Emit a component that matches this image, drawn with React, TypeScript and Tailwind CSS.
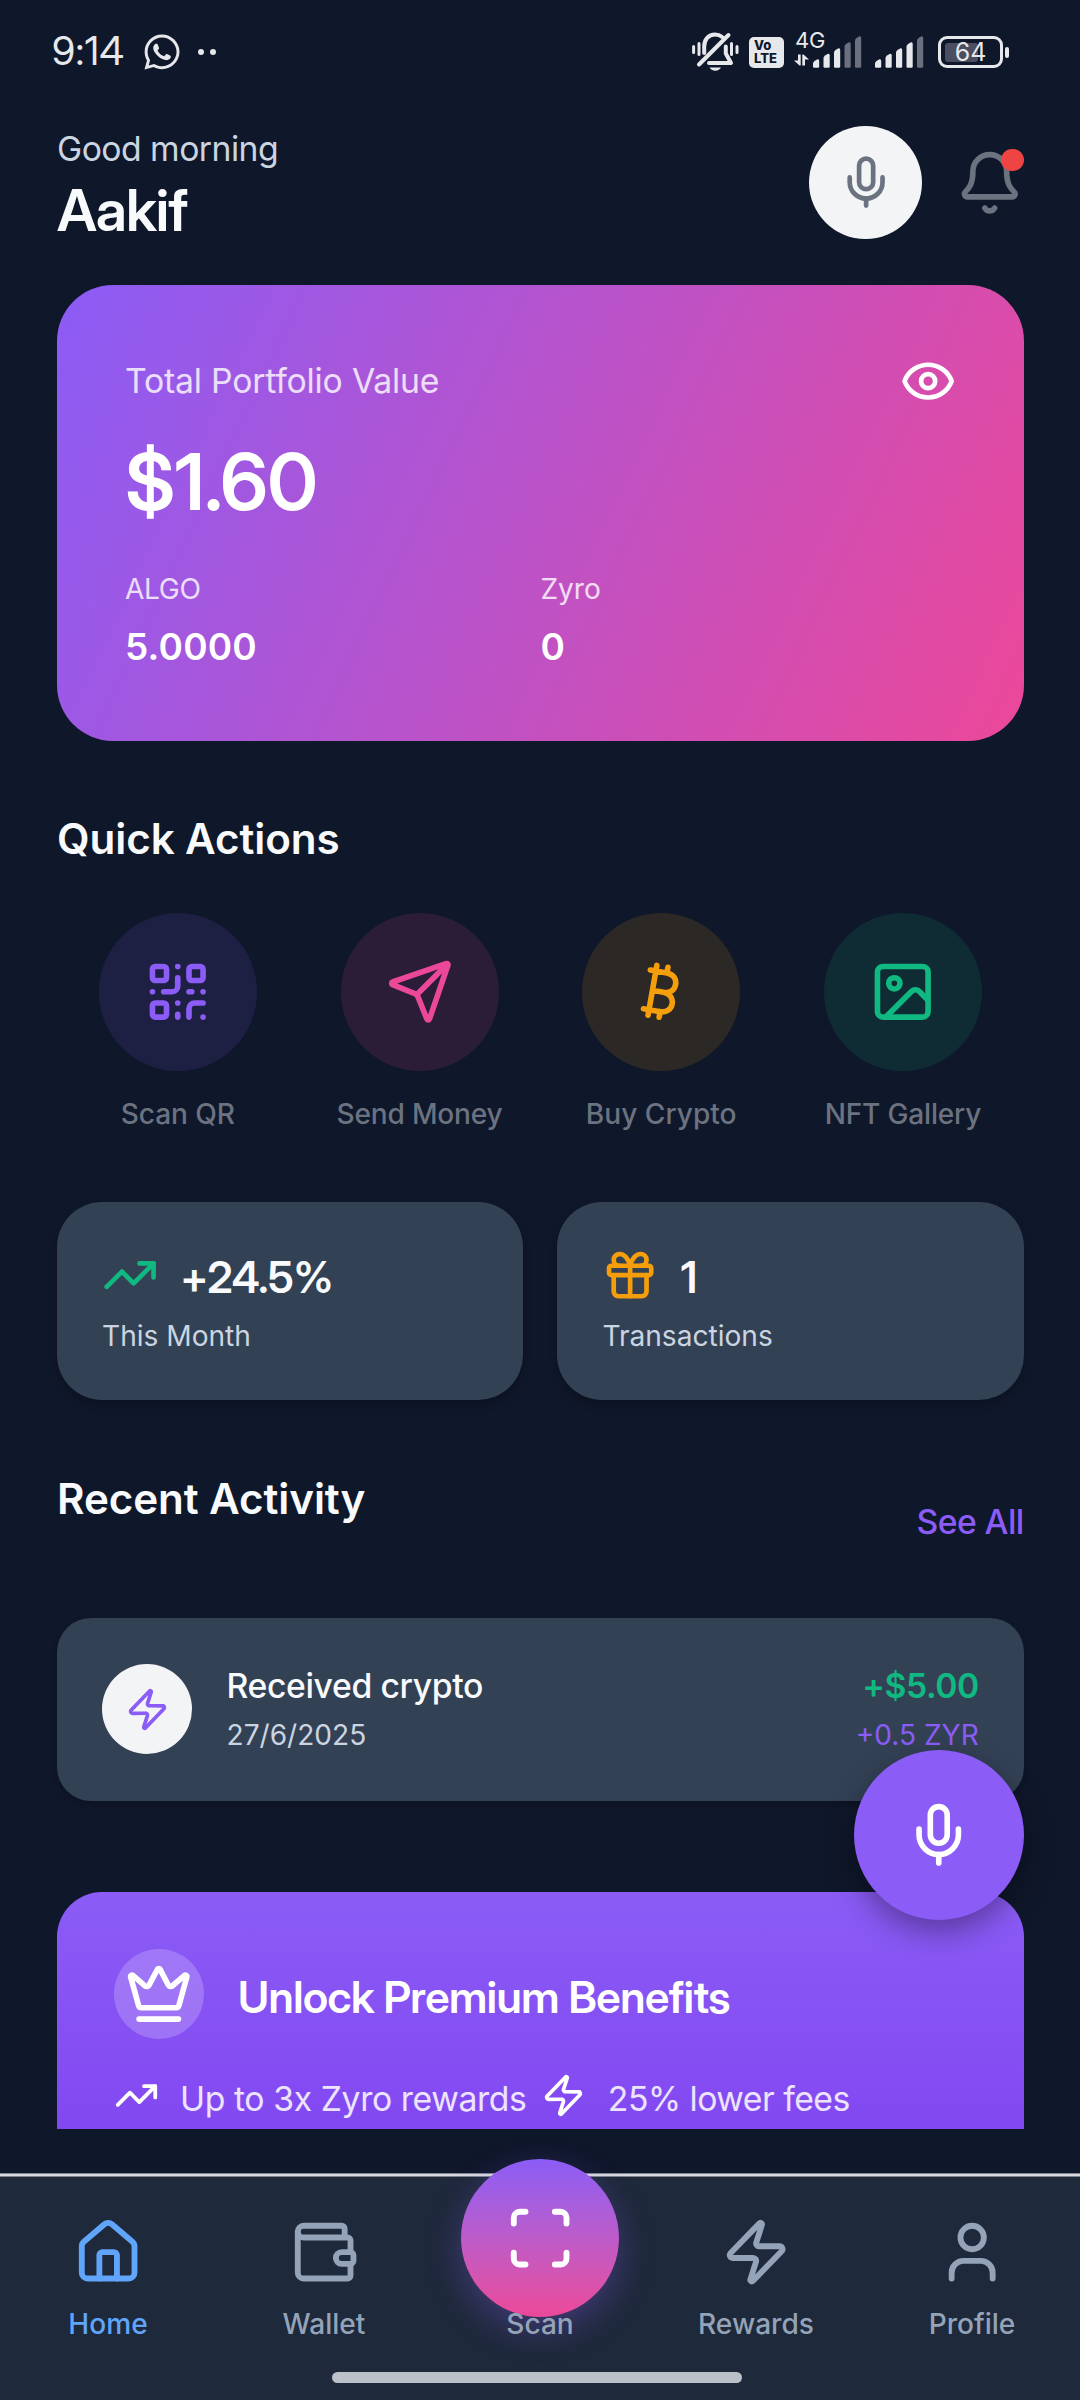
import type { ReactNode } from "react";
import {
  Bell,
  Bitcoin,
  Crown,
  Eye,
  Gift,
  House,
  Image,
  Mic,
  QrCode,
  Scan,
  Send,
  TrendingUp,
  User,
  Wallet,
  Zap,
  type LucideIcon,
} from "lucide-react";
import { FaWhatsapp } from "react-icons/fa";

type QuickAction = {
  label: string;
  icon: LucideIcon;
  circle: string;
  tracking: string;
};

const quickActions: QuickAction[] = [
  { label: "Scan QR", icon: QrCode, circle: "bg-[#8b5cf620] text-[#8b5cf6]", tracking: "tracking-[-0.1px]" },
  { label: "Send Money", icon: Send, circle: "bg-[#ec489920] text-[#ec4899]", tracking: "tracking-[-0.2px]" },
  { label: "Buy Crypto", icon: Bitcoin, circle: "bg-[#f59e0b20] text-[#f59e0b]", tracking: "tracking-normal" },
  { label: "NFT Gallery", icon: Image, circle: "bg-[#10b98120] text-[#10b981]", tracking: "tracking-[-0.2px]" },
];

const BAR_TOPS = [23, 17.5, 12, 6, 0];

function SignalBars({ level }: { level: number }) {
  return (
    <svg width="49" height="32" viewBox="0 0 49 32">
      {BAR_TOPS.map((top, i) => {
        const x = i * 10.5;
        return (
          <path
            key={top}
            d={`M${x} ${top + 4.5}Q${x} ${top + 3} ${x + 1.5} ${top + 2}L${x + 4.5} ${top + 0.3}Q${x + 6.2} ${top} ${x + 6.2} ${top + 1.8}V30.5Q${x + 6.2} 31.7 ${x + 5} 31.7H${x + 1.2}Q${x} 31.7 ${x} 30.5Z`}
            fill={i < level ? "#e7e8eb" : "#6b6f7e"}
          />
        );
      })}
    </svg>
  );
}

function StatusBar() {
  return (
    <div className="flex h-[102px] shrink-0 items-center pl-[52px] pr-[77px] pt-[2px] text-[#e7e8eb]">
      <span className="font-['Inter_Display','Inter',sans-serif] text-[39.5px] leading-none tracking-[0.5px]">9:14</span>
      <FaWhatsapp className="ml-[18px] size-[40px]" />
      <span className="ml-[16px] size-[6px] rounded-full bg-[#e7e8eb]" />
      <span className="ml-[6px] size-[6px] rounded-full bg-[#e7e8eb]" />

      <div className="ml-auto flex items-center">
        <svg width="47" height="40" viewBox="0 0 47 40" fill="none" stroke="currentColor" strokeWidth="3" strokeLinecap="round" strokeLinejoin="round">
          <path d="M1.6 14.5v6M7 11.5v11M39.5 11.5v11M45 14.5v6" />
          <path strokeWidth="4" d="M36.5 3 7 32.5" />
          <path strokeWidth="4" d="M12.2 21v-6.5C12.2 7.5 16.5 2.6 23 2.6c3 0 5.3.9 7.2 2.4M33.8 14.5v7L39 31H17" />
          <path d="M17.5 35.5H29c-1 2-3 3.2-5.7 3.2s-4.800-1.200-5.800-3.200Z" fill="currentColor" stroke="none" />
        </svg>
        <div className="ml-[10px] flex h-[31px] w-[35px] flex-col items-start justify-center rounded-[5px] bg-[#e7e8eb] pl-[5px] text-[13px] font-extrabold leading-[13px] text-[#0f172a]">
          <span>Vo</span>
          <span>LTE</span>
        </div>
        <div className="relative ml-[10px] flex items-end">
          <span className="absolute -top-[7px] left-[1px] text-[22px] leading-none tracking-[-0.3px]">4G</span>
          <svg width="15" height="12" viewBox="0 0 15 12" className="mb-[2px] mr-[4px]" fill="currentColor">
            <path d="M4 .5h2.700v11H5.500L0 6.500h4zM11 11.500H8.300V.5h1.200L15 5.500h-4z" />
          </svg>
          <SignalBars level={3} />
        </div>
        <div className="ml-[13px] flex">
          <SignalBars level={4} />
        </div>
        <div className="relative ml-[14px] flex h-[32px] w-[65px] items-center rounded-[9px] border-[3px] border-[#e7e8eb]">
          <span className="ml-[4px] h-[19px] w-[33px] rounded-[3px] bg-[#4a4e60]" />
          <span className="absolute inset-0 flex items-center justify-center text-[25px] leading-none">64</span>
          <span className="absolute -right-[9px] top-[8px] h-[11px] w-[4px] rounded-full bg-[#e7e8eb]" />
        </div>
      </div>
    </div>
  );
}

function Header() {
  return (
    <header className="flex items-start justify-between pt-[23px]">
      <div>
        <p className="text-[33.75px] leading-[48px] tracking-[-0.54px] text-[#cbd5e1]">Good morning</p>
        <h1 className="font-['Inter_Display','Inter',sans-serif] text-[57.5px] font-semibold leading-[74px] tracking-[-1px] text-[#f8fafc]">
          Aakif
        </h1>
      </div>
      <div className="flex items-center gap-[34px] pt-px">
        <button className="flex size-[113px] items-center justify-center rounded-full bg-[#f3f4f6] text-[#6b7280]">
          <Mic className="size-[56.25px]" />
        </button>
        <button className="relative text-[#6b7280]">
          <Bell className="size-[67.5px]" />
          <span className="absolute right-0 top-0 size-[22.5px] rounded-full bg-[#ef4444]" />
        </button>
      </div>
    </header>
  );
}

function PortfolioCard() {
  return (
    <section className="mt-[38px] h-[455.5px] rounded-[56px] bg-[linear-gradient(115.25deg,#8b5cf6,#ec4899)] px-[68px] pt-[68px] text-white">
      <div className="flex h-[57px] items-center justify-between">
        <span className="text-[33.75px] tracking-[-0.2px] text-white/80">Total Portfolio Value</span>
        <Eye className="size-[56.25px]" />
      </div>
      <p className="mt-[24px] font-['Inter_Display','Inter',sans-serif] text-[78.75px] font-semibold leading-[95px] tracking-[-0.5px]">
        $1.60
      </p>
      <div className="mt-[43px] grid grid-cols-2">
        <div>
          <p className="text-[28.1px] leading-[34px] tracking-[-0.3px] text-white/80">ALGO</p>
          <p className="mt-[19px] text-[37px] font-semibold leading-[44px] tracking-[0.2px]">5.0000</p>
        </div>
        <div>
          <p className="text-[28.1px] leading-[34px] text-white/80">Zyro</p>
          <p className="mt-[19px] text-[37px] font-semibold leading-[44px]">0</p>
        </div>
      </div>
    </section>
  );
}

function QuickActions() {
  return (
    <section className="mt-[68px]">
      <h2 className="text-[42.2px] font-semibold leading-[60px] tracking-[-0.1px] text-[#f8fafc]">Quick Actions</h2>
      <div className="mt-[44px] grid grid-cols-4">
        {quickActions.map(({ label, icon: Icon, circle, tracking }) => (
          <button key={label} className="flex flex-col items-center">
            <span className={`flex size-[158px] items-center justify-center rounded-full ${circle}`}>
              <Icon className="size-[67.5px]" />
            </span>
            <span className={`mt-[23.5px] text-[28.1px] font-medium leading-[40px] text-[#6b7280] ${tracking}`}>
              {label}
            </span>
          </button>
        ))}
      </div>
    </section>
  );
}

function StatCard({ icon, value, label }: { icon: ReactNode; value: string; label: string }) {
  return (
    <div className="h-[198px] rounded-[45px] bg-[#334155] px-[45px] pt-[45px] shadow-[0_5px_9px_rgba(0,0,0,0.22)]">
      <div className="flex h-[56.25px] items-center gap-[22px]">
        {icon}
        <span className="pt-[6px] font-['Inter_Display','Inter',sans-serif] text-[43.5px] font-semibold leading-none tracking-[-0.1px] text-[#f8fafc]">
          {value}
        </span>
      </div>
      <p className="mt-[13px] text-[28.1px] leading-[40px] text-[#cbd5e1]">{label}</p>
    </div>
  );
}

function RecentActivity() {
  return (
    <section className="mt-[69px]">
      <div className="flex h-[149px] items-start justify-between">
        <h2 className="text-[42.2px] font-semibold leading-[60px] tracking-[-0.1px] text-[#f8fafc]">Recent Activity</h2>
        <button className="mt-[28px] text-[33.75px] font-medium leading-[50px] tracking-[-0.6px] text-[#8b5cf6]">
          See All
        </button>
      </div>
      <div className="flex h-[182.5px] items-center rounded-[34px] bg-[#334155] px-[45px] shadow-[0_3px_6px_rgba(0,0,0,0.22)]">
        <span className="flex size-[90px] items-center justify-center rounded-full bg-[#f3f4f6] text-[#8b5cf6]">
          <Zap className="size-[45px]" />
        </span>
        <div className="ml-[34.5px] flex-1">
          <p className="text-[33.75px] font-medium leading-[52px] tracking-[-0.39px] text-[#f8fafc]">Received crypto</p>
          <p className="pt-px text-[28.1px] leading-[45px] text-[#cbd5e1]">27/6/2025</p>
        </div>
        <div className="text-right">
          <p className="text-[33.75px] font-semibold leading-[52px] tracking-[-0.5px] text-[#10b981]">+$5.00</p>
          <p className="pt-px text-[28.1px] leading-[45px] text-[#8b5cf6]">+0.5 ZYR</p>
        </div>
      </div>
    </section>
  );
}

function PremiumCard() {
  return (
    <section className="mt-[91.5px] h-[400px] rounded-[45px] bg-[linear-gradient(180deg,#8b5cf6_0%,#7c3aed_100%)] px-[57px] pt-[57px] text-white">
      <div className="flex h-[90px] items-center">
        <span className="flex size-[90px] items-center justify-center rounded-full bg-white/20">
          <Crown className="size-[67.5px]" />
        </span>
        <h3 className="ml-[34px] pt-[6px] font-['Inter_Display','Inter',sans-serif] text-[44px] font-semibold leading-none tracking-[-0.48px]">
          Unlock Premium Benefits
        </h3>
      </div>
      <div className="mt-[34px] flex h-[45px] items-center text-[33.75px] leading-none">
        <TrendingUp className="size-[45px]" />
        <span className="ml-[21px] pt-[6px] tracking-[-0.41px] text-white/85">Up to 3x Zyro rewards</span>
        <Zap className="ml-[15px] size-[45px]" />
        <span className="ml-[21.5px] pt-[6px] tracking-[-0.51px] text-white/85">25% lower fees</span>
      </div>
    </section>
  );
}

function NavTab({ label, icon: Icon, active }: { label: string; icon: LucideIcon; active?: boolean }) {
  return (
    <button className={`flex flex-col items-center ${active ? "text-[#60a5fa]" : "text-[#94a3b8]"}`}>
      <Icon className="size-[70.3px]" />
      <span className="mt-[17px] text-[28.1px] font-medium leading-[40px]">{label}</span>
    </button>
  );
}

function BottomNav() {
  return (
    <nav className="mt-[44px] h-[227px] shrink-0 bg-[#1e293b]">
      <div className="h-[4px] border-y border-[#7d828d] bg-[#d9dade]" />
      <div className="grid grid-cols-5 items-start pt-[40px]">
        <NavTab label="Home" icon={House} active />
        <NavTab label="Wallet" icon={Wallet} />
        <button className="-mt-[58px] flex flex-col items-center">
          <span className="flex size-[158px] items-center justify-center rounded-full bg-linear-to-b from-[#8b5cf6] to-[#ec4899] text-white shadow-[0_12px_34px_rgba(139,92,246,0.32)]">
            <Scan className="size-[70.3px]" />
          </span>
          <span className="relative -mt-[13px] text-[28.1px] font-medium leading-[40px] text-[#94a3b8]">Scan</span>
        </button>
        <NavTab label="Rewards" icon={Zap} />
        <NavTab label="Profile" icon={User} />
      </div>
      {/* system gesture handle */}
      <div className="ml-[332px] mt-[28px] h-[11px] w-[410px] rounded-full bg-[#bcc0c9]" />
    </nav>
  );
}

export default function App() {
  return (
    <div className="relative flex h-[2400px] w-[1080px] flex-col overflow-hidden bg-[#0f172a] font-['Inter',sans-serif]">
      <StatusBar />
      <main className="h-[2027px] shrink-0 overflow-hidden pl-[57px] pr-[56.25px]">
        <Header />
        <PortfolioCard />
        <QuickActions />
        <section className="mt-[68px] grid grid-cols-2 gap-[34px]">
          <StatCard icon={<TrendingUp className="size-[56.25px] text-[#10b981]" />} value="+24.5%" label="This Month" />
          <StatCard icon={<Gift className="size-[56.25px] text-[#f59e0b]" />} value="1" label="Transactions" />
        </section>
        <RecentActivity />
        <PremiumCard />
      </main>
      <BottomNav />

      <button className="absolute right-[56px] top-[1750px] flex size-[170px] items-center justify-center rounded-full bg-[#8b5cf6] text-white shadow-[0_12px_30px_rgba(0,0,0,0.35)]">
        <Mic className="size-[67.5px]" />
      </button>
    </div>
  );
}
